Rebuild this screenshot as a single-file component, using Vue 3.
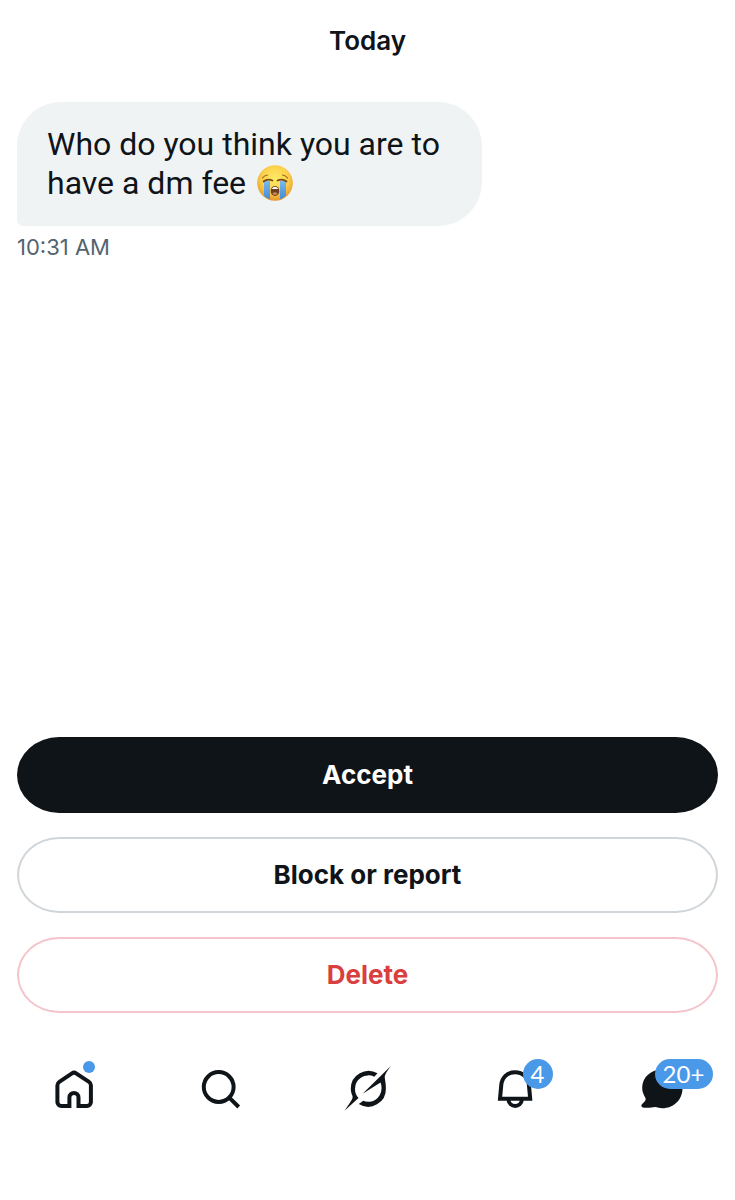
<template>
  <div class="screen">
    <main class="thread">
      <h1 class="day">Today</h1>
      <div class="message">
        <p class="bubble">
          Who do you think you are to have a dm fee
          <svg class="emoji" viewBox="0 0 36 36" role="img" aria-label="Loudly crying face">
            <defs>
              <radialGradient id="face" cx="50%" cy="38%" r="62%">
                <stop offset="0" stop-color="#ffeb68" />
                <stop offset="0.6" stop-color="#fbd04a" />
                <stop offset="1" stop-color="#e5962c" />
              </radialGradient>
              <linearGradient id="tear" x1="0" y1="0" x2="0" y2="1">
                <stop offset="0" stop-color="#7cb8ea" />
                <stop offset="1" stop-color="#4389da" />
              </linearGradient>
            </defs>
            <circle cx="18" cy="18" r="17.8" fill="url(#face)" />
            <path d="M7 16h6v18.300a18 18 0 0 1-6-3.600zM23 16h6v14.700a18 18 0 0 1-6 3.600z" fill="url(#tear)" />
            <path d="M6.500 16.500q4-3.200 9-1M20.500 15.500q5-2.200 9 1" fill="none" stroke="#7a4a14" stroke-width="1.800" stroke-linecap="round" />
            <path d="M5.500 13q2-2.800 5-3M25.500 10q3 .2 5 3" fill="none" stroke="#9a651c" stroke-width="1.200" stroke-linecap="round" />
            <ellipse cx="18" cy="26" rx="4.300" ry="5" fill="#6b3d1c" />
            <path d="M14.600 24q3.400-4.600 6.800 0z" fill="#fff" />
            <path d="M15.200 28.500q2.800-2.600 5.600 0-2.800 3.200-5.600 0z" fill="#c98558" />
          </svg>
        </p>
        <time class="time">10:31 AM</time>
      </div>
    </main>

    <div class="actions">
      <button
        v-for="action in actions"
        :key="action.kind"
        type="button"
        class="action"
        :class="action.kind"
      >
        {{ action.label }}
      </button>
    </div>

    <nav class="tabs" aria-label="Main">
      <a href="#home" class="tab" aria-label="Home">
        <span class="glyph">
          <svg class="icon line" viewBox="0 0 48 48">
            <path d="M19.400 41.100H11.400a4 4 0 0 1-4-4V20.300a4 4 0 0 1 1.900-3.400L22 8.300a3.600 3.600 0 0 1 4.100 0l12.900 8.600a4 4 0 0 1 1.900 3.400v16.800a4 4 0 0 1-4 4H28.500V32.500a4.550 4.550 0 0 0-9.100 0z" />
          </svg>
          <span class="dot"></span>
        </span>
      </a>
      <a href="#search" class="tab" aria-label="Search">
        <span class="glyph">
          <svg class="icon line" viewBox="0 0 48 48">
            <circle cx="21.700" cy="22" r="14.900" />
            <path d="M32 32.300l9.700 9.700" />
          </svg>
        </span>
      </a>
      <a href="#grok" class="tab" aria-label="Grok">
        <span class="glyph">
          <svg class="icon solid" viewBox="0 0 48 48">
            <path d="M33.500 8.300A17.700 17.700 0 0 0 6.800 23.500c0 3 .6 4.800 1.500 7 .6 1.500.3 2.700-.4 4C6.500 37.500 3.500 41 .5 45.700L14.500 33A13.600 13.600 0 0 1 11 23.900 13.300 13.300 0 0 1 30.300 11.800z" />
            <path d="M18.600 28.800L46.800 1c-3.400 5-6.400 8.500-6 12 .3 2.500 1.100 5.500 1.100 10.500A17.700 17.700 0 0 1 14.800 39l4.400-3.200A13.200 13.200 0 0 0 37.500 24c0-2.500 0-4.300-1-6.600z" />
          </svg>
        </span>
      </a>
      <a href="#notifications" class="tab" aria-label="Notifications">
        <span class="glyph">
          <svg class="icon line" viewBox="0 0 48 48">
            <path d="M9 33.800l1.300-14C11 12.200 16.600 7.200 24.100 7.200s13.100 5 13.800 12.600l1.300 14z" />
            <path d="M17.400 35c.6 3.600 3.400 6 6.800 6s6.100-2.400 6.700-6" />
          </svg>
          <span class="badge">4</span>
        </span>
      </a>
      <a href="#messages" class="tab" aria-label="Messages">
        <span class="glyph">
          <svg class="icon solid" viewBox="0 0 48 48">
            <path d="M24.500 4.500c11.500 0 20 8 20 18.700 0 11.500-8.800 20-20.300 20-2.700 0-4.700-1-6.900-1.200-3.600.6-8.800 1.400-12.500.4-1.700-.5-2-1.900-.8-3.100 2-2 3.800-3.200 3.700-5.200-.1-2.400-3.500-4.800-3.500-11.400C4.200 12.200 13 4.500 24.500 4.500z" />
          </svg>
          <span class="badge wide">20+</span>
        </span>
      </a>
    </nav>
  </div>
</template>

<script setup>
const actions = [
  { kind: 'accept', label: 'Accept' },
  { kind: 'block', label: 'Block or report' },
  { kind: 'delete', label: 'Delete' }
]
</script>

<style>
body {
  margin: 0;
  background: #fff;
}
</style>

<style scoped>
.screen {
  display: flex;
  flex-direction: column;
  box-sizing: border-box;
  min-height: 100vh;
  padding-bottom: 87px;
  background: #fff;
  color: #0f1419;
  font-family: Inter, 'Liberation Sans', sans-serif;
}

.thread {
  flex: 1;
  padding: 24px 17px;
}

.day {
  margin: 0 0 44px;
  font-size: 26px;
  font-weight: 600;
  line-height: 34px;
  text-align: center;
}

.message {
  display: flex;
  flex-direction: column;
  align-items: flex-start;
}

.bubble {
  box-sizing: border-box;
  max-width: 465px;
  margin: 0;
  padding: 23px 30px;
  border-radius: 44px 44px 44px 6px;
  background: #eff3f4;
  font-family: Roboto, sans-serif;
  font-size: 32px;
  line-height: 39px;
}

.emoji {
  width: 36px;
  height: 36px;
  margin-left: 3px;
  vertical-align: -7px;
}

.time {
  margin-top: 6px;
  color: #536471;
  font-size: 22px;
  line-height: 30px;
}

.actions {
  display: flex;
  flex-direction: column;
  gap: 24px;
  padding: 0 17px;
}

.action {
  height: 76px;
  padding: 0 30px;
  border: 2px solid #cfd9de;
  border-radius: 42px / 38px;
  background: #fff;
  color: #0f1419;
  font-family: inherit;
  font-size: 26px;
  font-weight: 700;
  line-height: 34px;
  cursor: pointer;
}

.accept {
  border-color: #0f1419;
  background: #0f1419;
  color: #fff;
}

.block {
  border-color: #d0d5d9;
}

.delete {
  border-color: #f4c4cb;
  color: #d93f3f;
}

.tabs {
  display: flex;
  padding-top: 52px;
}

.tab {
  display: flex;
  flex: 1;
  justify-content: center;
  color: #0f1419;
  text-decoration: none;
}

.glyph {
  position: relative;
  width: 48px;
  height: 48px;
}

.icon {
  display: block;
  width: 48px;
  height: 48px;
}

.line {
  fill: none;
  stroke: currentColor;
  stroke-width: 4;
}

.solid {
  fill: currentColor;
}

.dot {
  position: absolute;
  top: -4px;
  left: 33px;
  width: 12px;
  height: 12px;
  border-radius: 50%;
  background: #4a99e9;
}

.badge {
  position: absolute;
  top: -6px;
  left: 32px;
  width: 30px;
  height: 30px;
  border-radius: 15px;
  background: #4a99e9;
  color: #fff;
  font-family: Lato, sans-serif;
  font-size: 24px;
  line-height: 30px;
  text-align: center;
}

.wide {
  left: 17px;
  width: 58px;
}
</style>
